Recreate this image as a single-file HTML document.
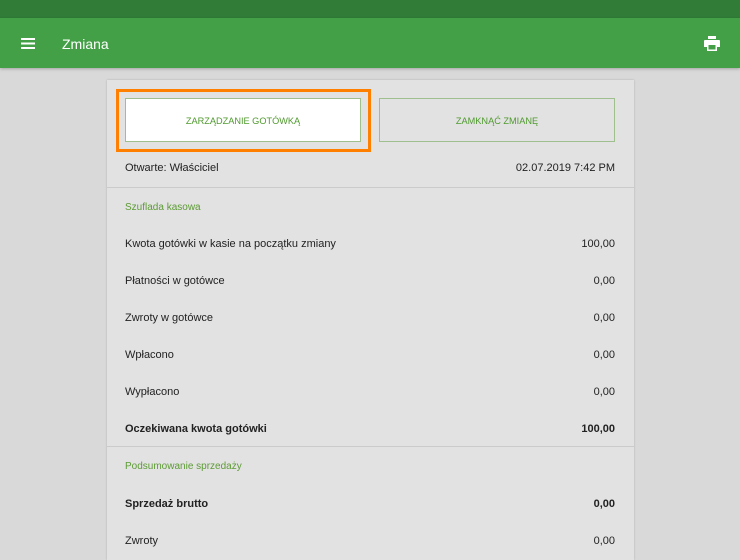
<!DOCTYPE html>
<html><head><meta charset="utf-8"><style>
*{margin:0;padding:0;box-sizing:border-box}
body{width:740px;height:555px;overflow:hidden;background:#d9d9d9;font-family:"Liberation Sans",sans-serif;position:relative}
.status{position:absolute;left:0;top:0;width:740px;height:18px;background:#317d38}
.bar{position:absolute;left:0;top:18px;width:740px;height:50px;background:#43a047;box-shadow:0 1px 3px rgba(0,0,0,.25)}
.bar .t{position:absolute;left:62px;top:18px;color:#fff;font-size:14px}
.card{position:absolute;left:107px;top:80px;width:527px;height:480px;background:#e2e2e2;box-shadow:0 0 2px rgba(0,0,0,.2)}
.hl{position:absolute;left:116px;top:89px;width:255px;height:63px;border:3px solid #ff8000;background:#e2e2e2}
.btn{position:absolute;top:98px;width:236px;height:44px;border:1px solid #9fbf8f;color:#4f9a2e;font-size:9.2px;display:flex;align-items:center;justify-content:center;padding-top:1px}
.row{position:absolute;left:125px;width:490px;font-size:11px;color:#222;display:flex;justify-content:space-between}
.sec{position:absolute;left:125px;font-size:10px;color:#5d9b35}
.div{position:absolute;left:107px;width:527px;height:1px;background:#cbcbcb}
b{font-weight:bold}
</style></head><body>
<div class="status"></div>
<div class="bar">
<svg style="position:absolute;left:21px;top:20px" width="14" height="11"><rect y="0" width="14" height="2" fill="#fff"/><rect y="4.5" width="14" height="2" fill="#fff"/><rect y="9" width="14" height="2" fill="#fff"/></svg>
<div class="t">Zmiana</div>
<svg style="position:absolute;left:704px;top:18px" width="16" height="15" viewBox="0 0 16 15"><rect x="4" y="0" width="8" height="3" fill="#fff"/><path d="M1 4h14a1 1 0 0 1 1 1v6h-3v4H3v-4H0V5a1 1 0 0 1 1-1z" fill="#fff"/><rect x="4.5" y="9" width="7" height="4.5" fill="#43a047"/></svg>
</div>
<div class="card"></div>
<div class="hl"></div>
<div class="btn" style="left:125px;background:#fff">ZARZĄDZANIE GOTÓWKĄ</div>
<div class="btn" style="left:379px">ZAMKNĄĆ ZMIANĘ</div>
<div class="row" style="top:162px"><span>Otwarte: Właściciel</span><span>02.07.2019 7:42 PM</span></div>
<div class="div" style="top:187px"></div>
<div class="sec" style="top:202px">Szuflada kasowa</div>
<div class="row" style="top:238px"><span>Kwota gotówki w kasie na początku zmiany</span><span>100,00</span></div>
<div class="row" style="top:275px"><span>Płatności w gotówce</span><span>0,00</span></div>
<div class="row" style="top:312px"><span>Zwroty w gotówce</span><span>0,00</span></div>
<div class="row" style="top:349px"><span>Wpłacono</span><span>0,00</span></div>
<div class="row" style="top:386px"><span>Wypłacono</span><span>0,00</span></div>
<div class="row" style="top:423px"><b>Oczekiwana kwota gotówki</b><b>100,00</b></div>
<div class="div" style="top:446px"></div>
<div class="sec" style="top:461px">Podsumowanie sprzedaży</div>
<div class="row" style="top:498px"><b>Sprzedaż brutto</b><b>0,00</b></div>
<div class="row" style="top:535px"><span>Zwroty</span><span>0,00</span></div>
</body></html>
